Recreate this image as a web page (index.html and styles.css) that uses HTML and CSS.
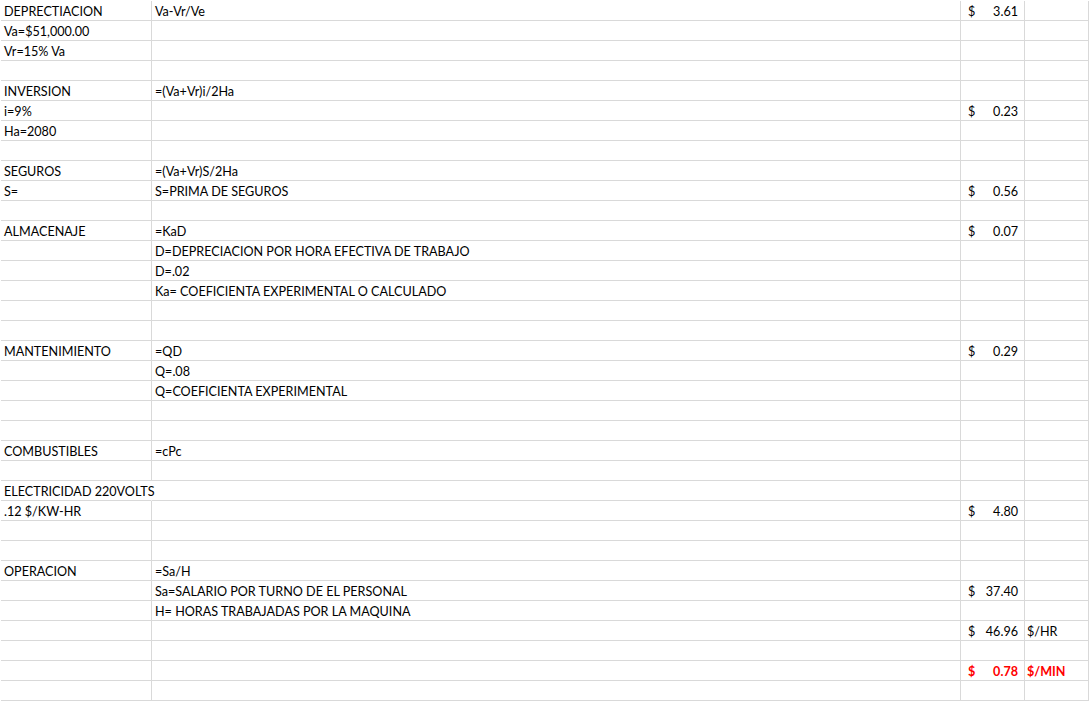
FILE: index.html
```html
<!DOCTYPE html>
<html lang="es">
<head>
    <meta charset="UTF-8">
    <title>Costo horario</title>
    <link rel="stylesheet" href="styles.css">
</head>
<body>
    <div class="sheet">
        <div class="row"><div>DEPRECTIACION</div><div>Va-Vr/Ve</div><div class="money"><span>$</span><span>3.61</span></div><div></div></div>
        <div class="row"><div>Va=$51,000.00</div><div></div><div></div><div></div></div>
        <div class="row"><div>Vr=15% Va</div><div></div><div></div><div></div></div>
        <div class="row"><div></div><div></div><div></div><div></div></div>
        <div class="row"><div>INVERSION</div><div>=(Va+Vr)i/2Ha</div><div></div><div></div></div>
        <div class="row"><div>i=9%</div><div></div><div class="money"><span>$</span><span>0.23</span></div><div></div></div>
        <div class="row"><div>Ha=2080</div><div></div><div></div><div></div></div>
        <div class="row"><div></div><div></div><div></div><div></div></div>
        <div class="row"><div>SEGUROS</div><div>=(Va+Vr)S/2Ha</div><div></div><div></div></div>
        <div class="row"><div>S=</div><div>S=PRIMA DE SEGUROS</div><div class="money"><span>$</span><span>0.56</span></div><div></div></div>
        <div class="row"><div></div><div></div><div></div><div></div></div>
        <div class="row"><div>ALMACENAJE</div><div>=KaD</div><div class="money"><span>$</span><span>0.07</span></div><div></div></div>
        <div class="row"><div></div><div>D=DEPRECIACION POR HORA EFECTIVA DE TRABAJO</div><div></div><div></div></div>
        <div class="row"><div></div><div>D=.02</div><div></div><div></div></div>
        <div class="row"><div></div><div>Ka= COEFICIENTA EXPERIMENTAL O CALCULADO</div><div></div><div></div></div>
        <div class="row"><div></div><div></div><div></div><div></div></div>
        <div class="row"><div></div><div></div><div></div><div></div></div>
        <div class="row"><div>MANTENIMIENTO</div><div>=QD</div><div class="money"><span>$</span><span>0.29</span></div><div></div></div>
        <div class="row"><div></div><div>Q=.08</div><div></div><div></div></div>
        <div class="row"><div></div><div>Q=COEFICIENTA EXPERIMENTAL</div><div></div><div></div></div>
        <div class="row"><div></div><div></div><div></div><div></div></div>
        <div class="row"><div></div><div></div><div></div><div></div></div>
        <div class="row"><div>COMBUSTIBLES</div><div>=cPc</div><div></div><div></div></div>
        <div class="row"><div></div><div></div><div></div><div></div></div>
        <div class="row"><div class="spill">ELECTRICIDAD 220VOLTS</div><div></div><div></div><div></div></div>
        <div class="row"><div>.12 $/KW-HR</div><div></div><div class="money"><span>$</span><span>4.80</span></div><div></div></div>
        <div class="row"><div></div><div></div><div></div><div></div></div>
        <div class="row"><div></div><div></div><div></div><div></div></div>
        <div class="row"><div>OPERACION</div><div>=Sa/H</div><div></div><div></div></div>
        <div class="row"><div></div><div>Sa=SALARIO POR TURNO DE EL PERSONAL</div><div class="money"><span>$</span><span>37.40</span></div><div></div></div>
        <div class="row"><div></div><div>H= HORAS TRABAJADAS POR LA MAQUINA</div><div></div><div></div></div>
        <div class="row"><div></div><div></div><div class="money"><span>$</span><span>46.96</span></div><div class="unit">$/HR</div></div>
        <div class="row"><div></div><div></div><div></div><div></div></div>
        <div class="row total"><div></div><div></div><div class="money"><span>$</span><span>0.78</span></div><div class="unit">$/MIN</div></div>
        <div class="row"><div></div><div></div><div></div><div></div></div>
    </div>
</body>
</html>
```

FILE: styles.css
```css
body {
    margin: 0;
    background-color: #ffffff;
    font-family: Lato, "Liberation Sans", sans-serif;
    font-size: 12.6px;
    color: #000000;
}

.sheet {
    padding: 1px 0 0 1px;
}

.row {
    display: grid;
    grid-template-columns: 151px 809px 64px 64px;
    height: 20px;
}

.row > div {
    box-sizing: border-box;
    height: 20px;
    padding: 0 0 0 3px;
    border-right: 1px solid #d9d9d9;
    border-bottom: 1px solid #d9d9d9;
    line-height: 21px;
    white-space: nowrap;
    overflow: hidden;
}

.row > div.spill {
    overflow: visible;
    border-right-color: #ffffff;
}

.row > div.money {
    display: flex;
    justify-content: space-between;
    padding: 0 6px 0 7px;
}

.row > div.unit {
    padding-left: 2px;
}

.total > div {
    color: #ff0000;
    font-weight: bold;
}
```
